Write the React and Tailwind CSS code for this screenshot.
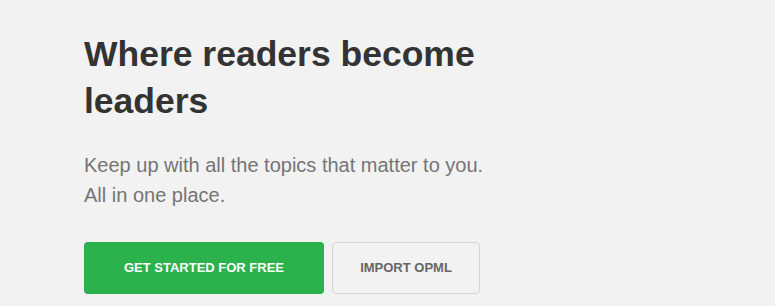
export default function App() {
  return (
    <div className="min-h-screen w-full bg-[#f2f2f2] font-['Liberation_Sans',Arial,sans-serif]">
      <div className="pl-[84px] pt-[31px]">
        <h1 className="text-[35.5px] leading-[47px] font-bold text-[#333333] w-[420px]">
          Where readers become leaders
        </h1>
        <p className="mt-[25px] text-[20px] leading-[30px] text-[#757575]">
          Keep up with all the topics that matter to you.
          <br />
          All in one place.
        </p>
        <div className="mt-[32px] flex gap-2">
          <button className="h-[52px] w-[240px] rounded-[4px] bg-[#2bb24c] text-[13px] font-bold uppercase text-white">
            Get started for free
          </button>
          <button className="h-[52px] w-[148px] rounded-[4px] border border-[#d6d6d6] bg-transparent text-[13px] font-bold uppercase text-[#666666]">
            Import OPML
          </button>
        </div>
      </div>
    </div>
  );
}
